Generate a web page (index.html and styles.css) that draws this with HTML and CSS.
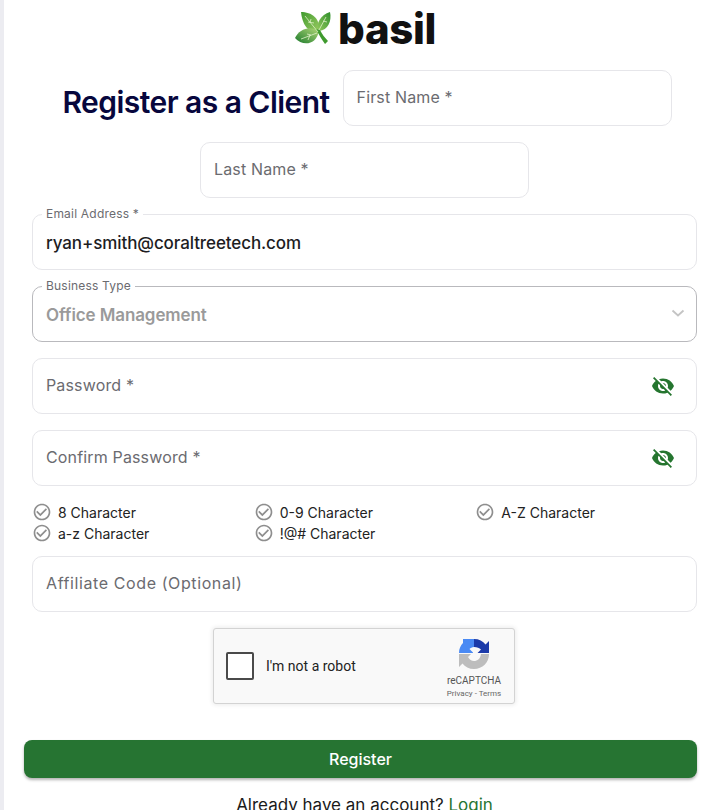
FILE: index.html
```html
<!DOCTYPE html>
<html lang="en">
<head>
<meta charset="utf-8">
<title>Register as a Client</title>
<link rel="stylesheet" href="styles.css">
</head>
<body>
<main class="page">
  <header class="logo">
    <svg class="logo-mark" width="38" height="36" viewBox="0 0 38 36">
      <defs>
        <linearGradient id="leafA" x1="0" y1="0" x2="1" y2="1"><stop offset="0" stop-color="#3f9a2e"/><stop offset="1" stop-color="#9ccc63"/></linearGradient>
        <linearGradient id="leafB" x1="1" y1="0" x2="0" y2="1"><stop offset="0" stop-color="#2f8f2c"/><stop offset="1" stop-color="#93c95c"/></linearGradient>
        <linearGradient id="leafC" x1="1" y1="0" x2="0" y2="1"><stop offset="0" stop-color="#b2d877"/><stop offset="1" stop-color="#1b7a2c"/></linearGradient>
      </defs>
      <path d="M6 2 C16 2 27 8 23 23 C13 23 7 14 6 2Z" fill="url(#leafA)"/>
      <path d="M35 2 C37 11 33 20 24 21 C20 13 26 5 35 2Z" fill="url(#leafB)"/>
      <path d="M24 21 C15 15 4 19 0 28 C7 36 21 36 24 21Z" fill="url(#leafC)"/>
      <path d="M21 19 L25 20 C27 24 30 28 33 31 L30 34 C27 30 24 25 21 19Z" fill="#3f9a2e"/>
      <path d="M10 6 L23 22 M16 9 L15 13 M13 12 L19 13 M31 7 L24 20 M28 11 L32 12 M22 23 L6 29 M15 25 L13 30 M12 24 L16 25" stroke="#dff1c8" stroke-width=".8" fill="none"/>
    </svg>
    <span class="logo-text">basil</span>
  </header>

  <form class="form">
    <div class="name-row">
      <h1 class="title">Register as a Client</h1>
      <div class="field field-name"><span class="placeholder">First Name *</span></div>
      <div class="field field-name"><span class="placeholder">Last Name *</span></div>
    </div>

    <div class="field">
      <span class="float-label">Email Address *</span>
      <span class="value">ryan+smith@coraltreetech.com</span>
    </div>

    <div class="field field-select">
      <span class="float-label">Business Type</span>
      <span class="value value-muted">Office Management</span>
      <svg class="chevron" width="24" height="24" viewBox="0 0 24 24"><path d="M6.5 9.5 L12 14.5 L17.5 9.5" fill="none" stroke="#c4c4c4" stroke-width="1.8"/></svg>
    </div>

    <div class="field">
      <span class="placeholder">Password *</span>
      <svg class="eye" width="24" height="24" viewBox="0 0 24 24"><path d="M12 7c2.76 0 5 2.24 5 5 0 .65-.13 1.26-.36 1.83l2.92 2.92c1.51-1.26 2.7-2.89 3.43-4.75-1.73-4.39-6-7.5-11-7.5-1.4 0-2.74.25-3.98.7l2.16 2.16C10.74 7.13 11.35 7 12 7zM2 4.27l2.28 2.28.46.46C3.08 8.3 1.78 10.02 1 12c1.73 4.39 6 7.5 11 7.5 1.55 0 3.03-.3 4.38-.84l.42.42L19.73 22 21 20.73 3.27 3 2 4.27zM7.53 9.8l1.55 1.55c-.05.21-.08.43-.08.65 0 1.66 1.34 3 3 3 .22 0 .44-.03.65-.08l1.55 1.55c-.67.33-1.41.53-2.2.53-2.76 0-5-2.24-5-5 0-.79.2-1.53.53-2.2zm4.31-.78l3.15 3.15.02-.16c0-1.66-1.34-3-3-3l-.17.01z"/></svg>
    </div>

    <div class="field">
      <span class="placeholder">Confirm Password *</span>
      <svg class="eye" width="24" height="24" viewBox="0 0 24 24"><path d="M12 7c2.76 0 5 2.24 5 5 0 .65-.13 1.26-.36 1.83l2.92 2.92c1.51-1.26 2.7-2.89 3.43-4.75-1.73-4.39-6-7.5-11-7.5-1.4 0-2.74.25-3.98.7l2.16 2.16C10.74 7.13 11.35 7 12 7zM2 4.27l2.28 2.28.46.46C3.08 8.3 1.78 10.02 1 12c1.73 4.39 6 7.5 11 7.5 1.55 0 3.03-.3 4.38-.84l.42.42L19.73 22 21 20.73 3.27 3 2 4.27zM7.53 9.8l1.55 1.55c-.05.21-.08.43-.08.65 0 1.66 1.34 3 3 3 .22 0 .44-.03.65-.08l1.55 1.55c-.67.33-1.41.53-2.2.53-2.76 0-5-2.24-5-5 0-.79.2-1.53.53-2.2zm4.31-.78l3.15 3.15.02-.16c0-1.66-1.34-3-3-3l-.17.01z"/></svg>
    </div>

    <ul class="rules">
      <li class="rule"><svg class="tick" width="20" height="20" viewBox="0 0 24 24"><path d="M16.59 7.58L10 14.17l-3.59-3.58L5 12l5 5 8-8zM12 2C6.48 2 2 6.48 2 12s4.48 10 10 10 10-4.48 10-10S17.52 2 12 2zm0 18c-4.42 0-8-3.58-8-8s3.58-8 8-8 8 3.58 8 8-3.58 8-8 8z"/></svg>8 Character</li>
      <li class="rule"><svg class="tick" width="20" height="20" viewBox="0 0 24 24"><path d="M16.59 7.58L10 14.17l-3.59-3.58L5 12l5 5 8-8zM12 2C6.48 2 2 6.48 2 12s4.48 10 10 10 10-4.48 10-10S17.52 2 12 2zm0 18c-4.42 0-8-3.58-8-8s3.58-8 8-8 8 3.58 8 8-3.58 8-8 8z"/></svg>0-9 Character</li>
      <li class="rule"><svg class="tick" width="20" height="20" viewBox="0 0 24 24"><path d="M16.59 7.58L10 14.17l-3.59-3.58L5 12l5 5 8-8zM12 2C6.48 2 2 6.48 2 12s4.48 10 10 10 10-4.48 10-10S17.52 2 12 2zm0 18c-4.42 0-8-3.58-8-8s3.58-8 8-8 8 3.58 8 8-3.58 8-8 8z"/></svg>A-Z Character</li>
      <li class="rule"><svg class="tick" width="20" height="20" viewBox="0 0 24 24"><path d="M16.59 7.58L10 14.17l-3.59-3.58L5 12l5 5 8-8zM12 2C6.48 2 2 6.48 2 12s4.48 10 10 10 10-4.48 10-10S17.52 2 12 2zm0 18c-4.42 0-8-3.58-8-8s3.58-8 8-8 8 3.58 8 8-3.58 8-8 8z"/></svg>a-z Character</li>
      <li class="rule"><svg class="tick" width="20" height="20" viewBox="0 0 24 24"><path d="M16.59 7.58L10 14.17l-3.59-3.58L5 12l5 5 8-8zM12 2C6.48 2 2 6.48 2 12s4.48 10 10 10 10-4.48 10-10S17.52 2 12 2zm0 18c-4.42 0-8-3.58-8-8s3.58-8 8-8 8 3.58 8 8-3.58 8-8 8z"/></svg>!@# Character</li>
    </ul>

    <div class="field"><span class="placeholder placeholder-wide">Affiliate Code (Optional)</span></div>

    <div class="captcha">
      <span class="captcha-box"></span>
      <span class="captcha-text">I'm not a robot</span>
      <div class="captcha-brand">
        <svg class="captcha-logo" width="32" height="32" viewBox="0 0 32 32">
          <path d="M1 15 C1 11 2.5 7.5 5 5 L5 1 L16 1 L16 9 C14 9 12.5 10 11.5 11 L15 14.5 L15 15 L9 15 L9 15Z" fill="#4a8af4"/>
          <path d="M16 1 C21 1 25 3 27.5 6.5 L31 3 L31 15 L19.5 15 L23 11.5 C21.5 10 19 9 16 9Z" fill="#1c3aa9"/>
          <path d="M1 16 L13 16 L10 19 C11.5 21.5 13.5 23 16 23 C19.5 23 22.5 20.5 23 16 L31 16 C31 24.5 24.5 31 16 31 C11 31 7 29 4.5 25.5 L1 29Z" fill="#bdbdbd"/>
        </svg>
        <span class="captcha-name">reCAPTCHA</span>
        <span class="captcha-links">Privacy - Terms</span>
      </div>
    </div>

    <button type="button" class="submit">Register</button>
    <p class="login">Already have an account? <a class="login-link" href="#">Login</a></p>
  </form>
</main>
</body>
</html>
```

FILE: styles.css
```css
* { box-sizing: border-box; }
html, body { margin: 0; height: 810px; overflow: hidden; background: #fff; }
body { font-family: Inter, "Noto Sans", sans-serif; color: #1a1a1a; }

.page {
  height: 810px;
  border-left: 4px solid #ececf1;
  padding: 10px 22px 0 20px;
  overflow: hidden;
}

.logo { display: flex; justify-content: center; align-items: center; gap: 5px; height: 36px; margin: 0 0 24px 10px; }
.logo-mark { flex: none; }
.logo-text { padding-top: 1px; font-size: 42px; font-weight: 800; line-height: 36px; color: #111; letter-spacing: -.4px; }

.form { display: flex; flex-direction: column; gap: 16px; padding-left: 8px; }

.name-row { display: flex; flex-wrap: wrap; justify-content: center; align-items: center; gap: 16px 13px; }
.title { margin: 8px 0 0 5px; font-size: 30px; line-height: 36px; font-weight: 600; color: #07073d; letter-spacing: -.55px; white-space: nowrap; }

.field {
  position: relative;
  display: flex;
  align-items: center;
  justify-content: space-between;
  height: 56px;
  padding: 0 13px 2px;
  border: 1px solid #e6e6ea;
  border-radius: 10px;
  background: #fff;
}
.field-name { width: 329px; }
.field-select { border-color: #b9b9bd; }

.placeholder { font-size: 16px; color: #6b6b70; letter-spacing: .15px; }
.placeholder-wide { letter-spacing: .6px; }
.value { margin-top: 3px; font-size: 17px; font-weight: 500; color: #1d1d1f; letter-spacing: -.1px; }
.value-muted { color: #9a9a9a; font-weight: 600; }

.float-label {
  position: absolute;
  top: -9px;
  left: 9px;
  padding: 0 4px;
  font-size: 12px;
  line-height: 15px;
  letter-spacing: .2px;
  color: #6b6b70;
  background: #fff;
}

.chevron { margin-right: -7px; }
.eye { fill: #25752f; margin: 2px 8px 0 0; }

.rules {
  list-style: none;
  margin: 0 0 -3px;
  padding: 0;
  display: grid;
  grid-template-columns: repeat(3, 1fr);
  row-gap: 1px;
}
.rule { display: flex; align-items: center; gap: 6px; height: 20px; font-size: 14px; color: #222; }
.tick { fill: #8e8e8e; flex: none; }

.captcha {
  align-self: center;
  display: flex;
  align-items: center;
  width: 302px;
  height: 76px;
  margin-right: 1px;
  padding: 0 12px;
  background: #f9f9f9;
  border: 1px solid #d3d3d3;
  border-radius: 3px;
  box-shadow: 0 0 4px 1px rgba(0,0,0,.08);
  font-family: Roboto, sans-serif;
}
.captcha-box { width: 28px; height: 28px; border: 2px solid #4a4a4a; border-radius: 2px; background: #fff; flex: none; }
.captcha-text { margin-left: 12px; font-size: 14px; color: #222; flex: 1; }
.captcha-brand { display: flex; flex-direction: column; align-items: center; width: 56px; padding-top: 5px; }
.captcha-logo { margin: 0 0 4px -1px; }
.captcha-name { font-size: 10px; line-height: 13px; color: #555; }
.captcha-links { margin-top: 1px; font-size: 8px; line-height: 12px; color: #666; white-space: nowrap; }

.submit {
  width: 673px;
  height: 38px;
  margin: 20px 0 0 -8px;
  border: 0;
  border-radius: 8px;
  background: #267432;
  color: #fff;
  font-family: inherit;
  font-size: 16px;
  font-weight: 500;
  box-shadow: 0 2px 3px rgba(0,0,0,.3);
}

.login { margin: 0; text-align: center; font-size: 17px; line-height: 22px; color: #1a1a1a; }
.login-link { color: #267432; text-decoration: none; }
```
